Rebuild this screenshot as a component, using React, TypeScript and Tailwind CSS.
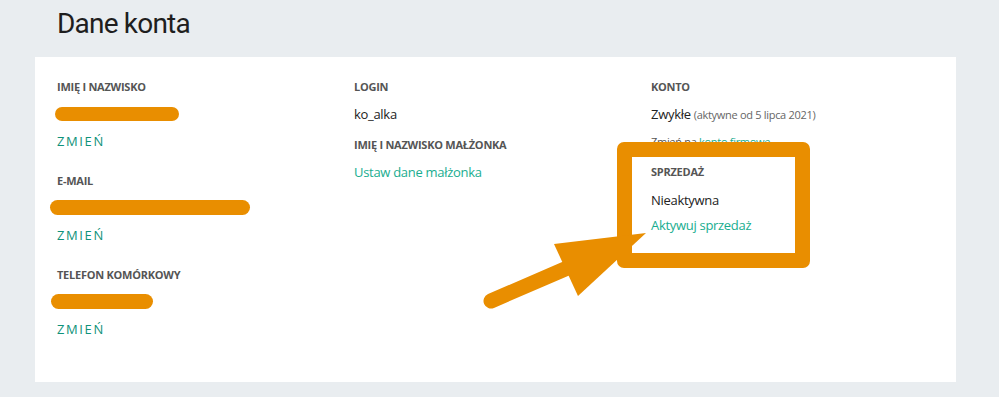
import React from "react";

const Label = ({ children, className = "" }: { children: React.ReactNode; className?: string }) => (
  <div className={`text-[11px] leading-[16px] font-bold uppercase tracking-[-0.25px] text-[#555555] ${className}`}>{children}</div>
);

const Change = ({ className = "" }: { className?: string }) => (
  <div className={`text-[13px] leading-[20px] tracking-[1.6px] text-[#0f927a] ${className}`}>ZMIEŃ</div>
);

export default function App() {
  return (
    <div
      className="relative w-[999px] h-[397px] bg-[#e9edf0] overflow-hidden"
      style={{ fontFamily: '"Open Sans", "Noto Sans", sans-serif' }}
    >
      <div className="h-[57px] pl-[57px] pt-[6px]">
        <h1
          className="text-[28px] leading-[36px] tracking-[-0.8px] text-[#1e1e1e] font-normal"
          style={{ fontFamily: 'Roboto, "Liberation Sans", sans-serif' }}
        >
          Dane konta
        </h1>
      </div>
      <div className="ml-[35px] w-[921px] h-[325px] bg-white pl-[22px] pt-[22px] grid grid-cols-[297px_297px_1fr]">
        <div className="flex flex-col">
          <Label>Imię i nazwisko</Label>
          <div className="mt-[12px] -ml-[2px] h-[14px] w-[124px] rounded-full bg-[#e98e00]" />
          <Change className="mt-[10px]" />
          <Label className="mt-[22px]">E-mail</Label>
          <div className="mt-[11px] -ml-[7px] h-[15px] w-[200px] rounded-full bg-[#e98e00]" />
          <Change className="mt-[10px]" />
          <Label className="mt-[22px]">Telefon komórkowy</Label>
          <div className="mt-[11px] -ml-[6px] h-[15px] w-[102px] rounded-full bg-[#e98e00]" />
          <Change className="mt-[10px]" />
        </div>
        <div className="flex flex-col">
          <Label>Login</Label>
          <div className="mt-[9px] text-[13px] leading-[20px] tracking-[-0.3px] text-[#222222]">ko_alka</div>
          <Label className="mt-[13px]">Imię i nazwisko małżonka</Label>
          <div className="mt-[9px] text-[13px] leading-[20px] tracking-[-0.3px] text-[#19ad8f]">Ustaw dane małżonka</div>
        </div>
        <div className="flex flex-col">
          <Label>Konto</Label>
          <div className="mt-[9px] text-[13px] leading-[20px] tracking-[-0.3px] text-[#222222]">
            Zwykłe <span className="text-[11px] text-[#666666]">(aktywne od 5 lipca 2021)</span>
          </div>
          <div className="mt-[8px] text-[11px] leading-[18px] tracking-[-0.3px] text-[#555555]">
            Zmień na <span className="text-[#19ad8f]">konto firmowe</span>
          </div>
          <Label className="mt-[13px]">Sprzedaż</Label>
          <div className="mt-[10px] text-[13px] leading-[20px] tracking-[-0.3px] text-[#222222]">Nieaktywna</div>
          <div className="mt-[5px] text-[13px] leading-[20px] tracking-[-0.3px] text-[#19ad8f]">Aktywuj sprzedaż</div>
        </div>
      </div>

      {/* annotation overlay */}
      <div className="absolute left-[617px] top-[142px] w-[193px] h-[126px] border-[15px] border-[#e98e00] rounded-[7px]" />
      <svg className="absolute left-0 top-0" width="999" height="397" viewBox="0 0 999 397">
        <line x1="491" y1="301" x2="572" y2="266" stroke="#e98e00" strokeWidth="15" strokeLinecap="round" />
        <polygon points="554,244 646,233 578,296" fill="#e98e00" />
      </svg>
    </div>
  );
}
